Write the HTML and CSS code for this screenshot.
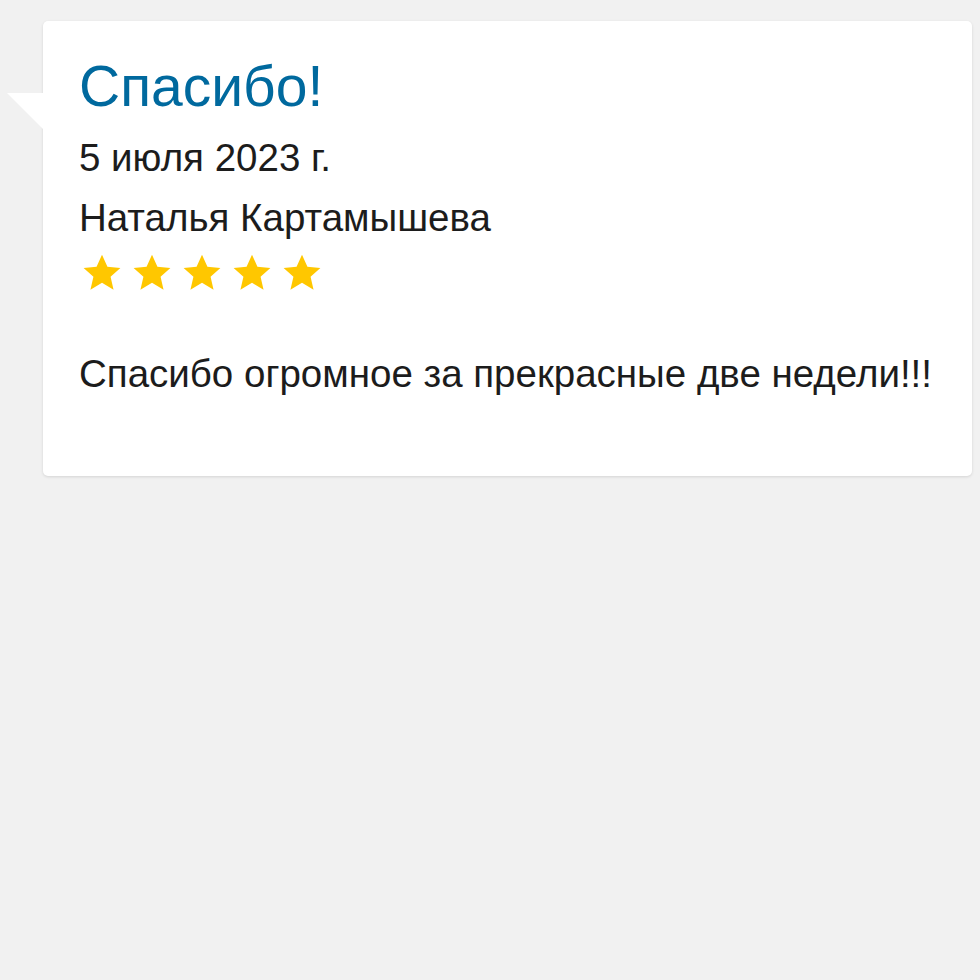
FILE: index.html
```html
<!DOCTYPE html>
<html lang="ru">
<head>
    <meta charset="UTF-8">
    <title>Отзыв</title>
    <link rel="stylesheet" href="styles.css">
</head>
<body>
    <div class="review">
        <h2 class="review-title">Спасибо!</h2>
        <p class="review-date">5 июля 2023 г.</p>
        <p class="review-author">Наталья Картамышева</p>
        <div class="review-stars">
            <svg class="star" viewBox="0 0 24 24"><path d="M12 1.5l3.1 6.9 7.4.7-5.6 5 1.7 7.4L12 17.6l-6.6 3.9 1.7-7.4-5.6-5 7.4-.7z"/></svg>
            <svg class="star" viewBox="0 0 24 24"><path d="M12 1.5l3.1 6.9 7.4.7-5.6 5 1.7 7.4L12 17.6l-6.6 3.9 1.7-7.4-5.6-5 7.4-.7z"/></svg>
            <svg class="star" viewBox="0 0 24 24"><path d="M12 1.5l3.1 6.9 7.4.7-5.6 5 1.7 7.4L12 17.6l-6.6 3.9 1.7-7.4-5.6-5 7.4-.7z"/></svg>
            <svg class="star" viewBox="0 0 24 24"><path d="M12 1.5l3.1 6.9 7.4.7-5.6 5 1.7 7.4L12 17.6l-6.6 3.9 1.7-7.4-5.6-5 7.4-.7z"/></svg>
            <svg class="star" viewBox="0 0 24 24"><path d="M12 1.5l3.1 6.9 7.4.7-5.6 5 1.7 7.4L12 17.6l-6.6 3.9 1.7-7.4-5.6-5 7.4-.7z"/></svg>
        </div>
        <p class="review-text">Спасибо огромное за прекрасные две недели!!!</p>
    </div>
</body>
</html>
```

FILE: styles.css
```css
* {
    margin: 0;
    padding: 0;
    box-sizing: border-box;
}

body {
    font-family: "Liberation Sans", Arial, sans-serif;
    background-color: #f1f1f1;
    min-height: 100vh;
    padding: 21px 8px 0 43px;
}

.review {
    position: relative;
    background: #fff;
    border-radius: 5px;
    box-shadow: 0 1px 3px rgba(0,0,0,0.12);
    padding: 31px 36px 77px;
    color: #1c1c1c;
}

/* speech bubble tail */
.review::before {
    content: "";
    position: absolute;
    left: -36px;
    top: 72px;
    border-top: 36px solid #fff;
    border-left: 36px solid transparent;
}

.review-title {
    font-size: 57px;
    font-weight: normal;
    color: #00699e;
    line-height: 1.2;
    margin-bottom: 8px;
}

.review-date,
.review-author {
    font-size: 38.5px;
    line-height: 60px;
}

.review-stars {
    display: flex;
    gap: 8px;
    margin: 4px 0 55px 2px;
}

.star {
    width: 42px;
    height: 42px;
    fill: #ffc700;
}

.review-text {
    font-size: 38.5px;
    line-height: 50px;
}
```
